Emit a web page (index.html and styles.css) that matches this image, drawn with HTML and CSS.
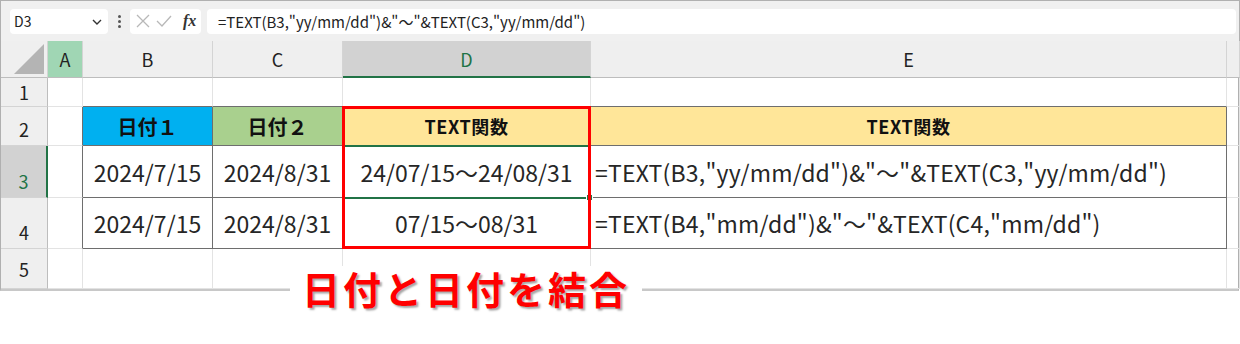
FILE: index.html
```html
<!DOCTYPE html>
<html lang="ja">
<head>
  <meta charset="UTF-8" />
  <title>TEXT関数 日付の結合</title>
  <link rel="stylesheet" href="styles.css">
</head>
<body>

<div class="app">
  <div class="toolbar">
    <div class="namebox">
      <span>D3</span>
      <svg class="chev" width="10" height="6" viewBox="0 0 10 6"><path d="M1 1l4 4 4-4" fill="none" stroke="#333" stroke-width="1.4"/></svg>
    </div>
    <div class="dots"><i></i><i></i><i></i></div>
    <div class="fxbox">
      <svg width="14" height="14" viewBox="0 0 14 14"><path d="M1 1l12 12M13 1L1 13" stroke="#b8b8b8" stroke-width="1.3" fill="none"/></svg>
      <svg width="16" height="14" viewBox="0 0 16 14"><path d="M1 7l5 5 9-10" stroke="#b8b8b8" stroke-width="1.3" fill="none"/></svg>
      <span class="fx">fx</span>
    </div>
    <div class="formula">=TEXT(B3,"yy/mm/dd")&amp;"～"&amp;TEXT(C3,"yy/mm/dd")</div>
  </div>

  <div class="sheet">
    <!-- column headers -->
    <div class="ch corner">
      <svg width="32" height="32" viewBox="0 0 32 32"><path d="M31 1V31H1Z" fill="#b4b4b4"/></svg>
    </div>
    <div class="ch col-a">A</div>
    <div class="ch">B</div>
    <div class="ch">C</div>
    <div class="ch col-sel">D</div>
    <div class="ch">E</div>
    <div class="ch"></div>

    <!-- row 1 -->
    <div class="rh mid">1</div>
    <div class="c"></div>
    <div class="c above"></div>
    <div class="c above"></div>
    <div class="c above"></div>
    <div class="c above"></div>
    <div class="c"></div>

    <!-- row 2 -->
    <div class="rh">2</div>
    <div class="c before"></div>
    <div class="c t head blue">日付１</div>
    <div class="c t head green">日付２</div>
    <div class="c t head yellow small">TEXT関数</div>
    <div class="c t head yellow small">TEXT関数</div>
    <div class="c"></div>

    <!-- row 3 -->
    <div class="rh row-sel">3</div>
    <div class="c before"></div>
    <div class="c t val">2024/7/15</div>
    <div class="c t val">2024/8/31</div>
    <div class="c t val">24/07/15～24/08/31</div>
    <div class="c t val left">=TEXT(B3,"yy/mm/dd")&amp;"～"&amp;TEXT(C3,"yy/mm/dd")</div>
    <div class="c"></div>

    <!-- row 4 -->
    <div class="rh">4</div>
    <div class="c before"></div>
    <div class="c t val">2024/7/15</div>
    <div class="c t val">2024/8/31</div>
    <div class="c t val">07/15～08/31</div>
    <div class="c t val left">=TEXT(B4,"mm/dd")&amp;"～"&amp;TEXT(C4,"mm/dd")</div>
    <div class="c"></div>

    <!-- row 5 -->
    <div class="rh mid">5</div>
    <div class="c"></div>
    <div class="c"></div>
    <div class="c"></div>
    <div class="c"></div>
    <div class="c"></div>
    <div class="c"></div>

    <div class="active-cell"><span class="handle"></span></div>
    <div class="red-box"></div>
  </div>

  <div class="caption">日付と日付を結合</div>
</div>

</body>
</html>
```

FILE: styles.css
```css
body { margin: 0; background: #fff; font-family: "Noto Sans CJK JP", "Noto Sans", sans-serif; color: #222; }
.app { position: relative; width: 1240px; height: 344px; }

.toolbar { height: 41px; background: #f0f0f0; border: 1px solid #b0b0b0; border-bottom: none; display: flex; align-items: center; padding: 0 3px 0 9px; box-sizing: border-box; }
.namebox { width: 98px; height: 25px; background: #fff; border-radius: 4px; display: flex; align-items: center; justify-content: space-between; padding: 0 6px 0 4px; box-sizing: border-box; font-size: 14px; }
.chev { margin-top: 1px; }
.dots { width: 22px; display: flex; flex-direction: column; align-items: center; gap: 2px; }
.dots i { width: 3px; height: 3px; background: #555; border-radius: 50%; }
.fxbox { width: 71px; height: 25px; background: #fff; border-radius: 4px; display: flex; align-items: center; gap: 6px; padding-left: 6px; box-sizing: border-box; }
.fx { font-family: "Liberation Serif", serif; font-style: italic; font-weight: bold; font-size: 16px; color: #333; margin-left: 5px; }
.formula { flex: 1; height: 25px; margin-left: 6px; background: #fff; border-radius: 4px; padding-left: 11px; font-size: 15px; line-height: 25px; }

.sheet { position: relative; display: grid; grid-template-columns: 47px 35px 130px 130px 248px 636px 13px; grid-template-rows: 37px 29px 39px 52px 51px 40px; border-left: 1px solid #b0b0b0; border-right: 1px solid #b0b0b0; border-bottom: 2px solid #c8c8c8; width: 1239px; box-sizing: border-box; }
.sheet > div { box-sizing: border-box; }

.ch { background: #efefef; border-right: 1px solid #d4d4d4; border-bottom: 1px solid #bdbdbd; display: flex; align-items: center; justify-content: center; font-size: 18px; }
.corner { align-items: flex-end; justify-content: flex-end; padding: 0 2px 2px 0; }
.col-a { background: #a0d6b4; }
.col-sel { background: #d2d2d2; color: #217346; border-bottom: 2px solid #217346; }

.rh { background: #efefef; border-right: 1px solid #bdbdbd; border-bottom: 1px solid #d4d4d4; display: flex; align-items: flex-end; justify-content: center; padding-bottom: 3px; font-size: 18px; }
.rh.mid { align-items: center; padding-bottom: 0; }
.row-sel { background: #d2d2d2; color: #217346; border-right: 2px solid #217346; }

.c { border-right: 1px solid #e3e3e3; border-bottom: 1px solid #e3e3e3; }
.c.above { border-bottom-color: #6e6e6e; }
.c.before { border-right-color: #6e6e6e; }
.c.t { border-color: #6e6e6e; display: flex; align-items: center; justify-content: center; }
.head { font-weight: bold; font-size: 20px; color: #111; }
.head.small { font-size: 18px; letter-spacing: 0.6px; }
.blue { background: #00b0f0; }
.green { background: #a9d08e; }
.yellow { background: #ffe699; }
.val { font-size: 23px; color: #262626; }
.val.left { justify-content: flex-start; padding-left: 4px; white-space: nowrap; letter-spacing: 0.2px; }

/* overlays placed on grid areas, outside auto placement */
.active-cell { position: absolute; grid-column: 5 / 6; grid-row: 4 / 5; top: -1px; bottom: -1px; left: -1px; right: 0; border: 2px solid #217346; z-index: 1; }
.handle { position: absolute; right: -4px; bottom: -4px; width: 5px; height: 5px; background: #217346; border: 1px solid #fff; }
.red-box { position: absolute; grid-column: 5 / 6; grid-row: 3 / 6; top: -1px; bottom: 0; left: -1px; right: 0; border: 3px solid #ff0000; z-index: 2; }

.caption { position: absolute; left: 290px; top: 266px; width: 352px; background: #fff; text-align: center; color: #ff0000; font-weight: bold; font-size: 38px; line-height: 44px; letter-spacing: 3px; text-shadow: 2px 2px 2px rgba(0, 0, 0, 0.35); }
```
